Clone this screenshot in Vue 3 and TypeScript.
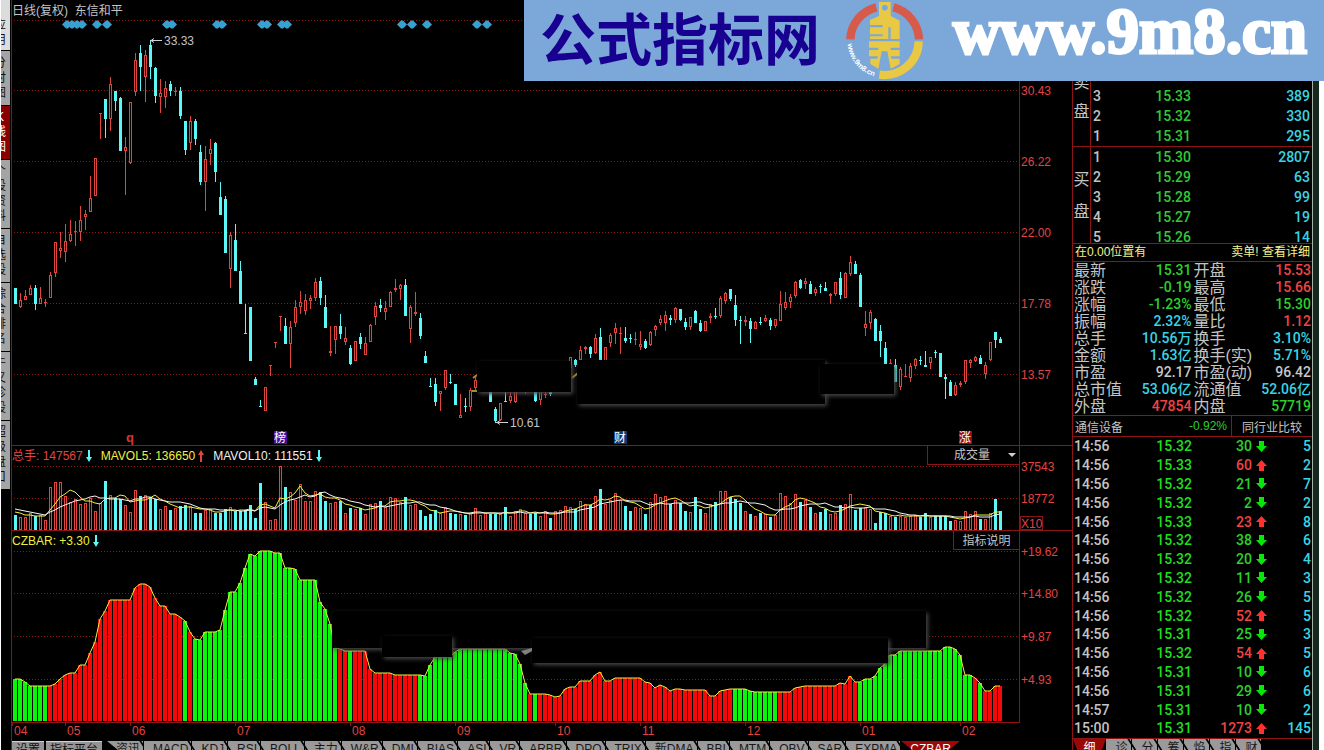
<script setup lang="ts">
import { ref } from 'vue'

type Tone = 'up' | 'down'

// One candle per entry: direction, high, body top, body bottom, low (chart units, y grows downwards).
const candleData =
  'c288,288,304,304 r293,300,307,308 r290,296,300,300 r285,288,295,295 c285,288,304,310 r287,298,304,304 r299,302,303,307 r272,275,298,298 r242,242,273,277 r232,248,251,258 ' +
  'r224,241,252,262 r220,234,241,242 r221,231,232,246 r206,220,232,241 r210,214,217,230 r176,198,212,212 r158,158,196,196 r113,113,114,139 c99,99,119,138 r77,84,119,131 ' +
  'c91,91,101,111 c97,98,151,151 r137,147,151,195 r102,102,163,164 r53,60,92,96 c45,53,67,91 r50,55,77,102 c40,45,67,79 c67,68,96,103 r79,93,97,113 ' +
  'r81,88,97,108 c81,84,91,96 r87,91,92,96 c87,91,116,119 c121,121,150,155 r116,121,143,150 c119,121,139,145 c145,152,182,185 r146,159,182,211 r139,149,154,165 ' +
  'c142,143,172,182 c182,197,215,215 c196,199,253,253 r232,235,269,288 c224,240,271,271 c261,271,304,304 c304,333,334,334 c307,307,361,361 c377,379,385,385 c400,406,407,407 ' +
  'r387,387,411,411 r365,365,366,376 r342,342,343,348 r316,316,317,331 c318,326,344,344 r321,327,344,368 r300,307,323,327 r291,302,307,314 r294,300,311,315 r295,298,301,309 ' +
  'r278,282,298,301 c277,281,298,305 c295,307,328,328 r326,351,353,356 r326,326,340,354 c314,326,334,339 r327,338,342,345 c345,348,364,365 r341,341,361,361 c333,337,344,349 ' +
  'r337,343,355,355 r324,325,342,342 r302,306,317,325 c299,305,308,312 r301,308,312,320 r291,292,307,307 r279,288,290,292 r284,285,289,300 c279,285,316,316 r305,307,329,343 ' +
  'r292,312,314,316 c313,318,336,339 c351,356,363,363 c378,386,387,387 c378,384,402,406 r391,391,394,411 r370,370,388,390 c374,382,383,384 c384,384,405,405 r394,415,418,418 ' +
  'c398,406,407,412 r388,390,407,411 r375,380,388,391 r384,386,390,391 r384,386,390,391 c390,390,402,402 c407,409,421,423 r403,403,420,421 c385,401,402,402 r390,396,401,403 ' +
  'r390,390,402,403 r384,386,390,391 r380,390,391,394 c384,386,390,391 c388,388,401,402 r388,388,400,405 r388,394,395,398 c388,392,394,396 r380,384,388,390 r376,380,386,388 ' +
  'r368,372,380,384 r357,357,368,368 c359,360,365,367 r346,350,360,361 r346,347,349,354 c346,347,354,358 r334,338,353,354 c328,337,360,360 r347,347,361,361 r333,335,343,347 ' +
  'r323,328,333,344 r327,333,334,354 c327,338,341,343 c334,338,339,343 r332,339,340,345 r331,344,347,350 c339,341,348,349 r331,332,345,346 r325,326,330,336 r315,319,323,325 ' +
  'r311,315,323,331 c315,318,320,325 r307,308,320,323 c309,309,320,321 c318,322,327,330 r317,317,327,330 c310,311,323,323 c320,323,331,332 r321,321,331,331 r313,316,318,323 ' +
  'c308,316,317,319 r296,298,316,318 r292,293,301,304 c289,289,299,301 c295,305,320,326 c316,320,321,344 r316,320,322,326 c318,321,329,343 r321,322,329,329 c317,322,323,325 ' +
  'r315,318,321,322 c318,320,326,330 r319,319,326,328 r291,304,321,321 r292,302,308,310 r294,297,302,308 r281,282,296,298 c279,280,288,289 r278,281,284,289 c281,284,294,294 ' +
  'r287,289,293,296 c284,286,287,293 c282,288,291,291 r293,294,296,304 r282,282,294,296 c272,278,295,299 r272,273,298,298 r256,262,274,276 c261,264,274,274 c273,275,307,307 ' +
  'r311,324,328,336 r310,312,323,329 c318,319,341,341 c325,331,341,357 c342,348,364,364 r359,363,364,364 c359,365,382,382 r367,369,387,390 r364,376,377,377 r363,366,378,382 ' +
  'r358,359,366,369 c356,360,361,365 c351,365,367,367 r357,357,363,369 c350,352,353,358 c353,353,377,377 c374,377,379,399 c380,382,396,396 r382,385,395,396 r381,383,385,387 ' +
  'r360,360,382,384 r359,360,363,368 r356,357,361,362 c355,358,364,364 r362,365,374,379 r342,342,360,361 c332,332,340,348 c337,339,343,343'

const xOf = (i: number) => 15 + i * 5

const candles = candleData.split(' ').map((s, i) => {
  const [high, top, bottom, low] = s.slice(1).split(',').map(Number)
  const tone: Tone = s[0] === 'r' ? 'up' : 'down'
  return { x: xOf(i), tone, high, top, bottom, low, height: Math.max(1, bottom - top) }
})

// Volume per day in thirds of a unit.
const volumes = [
  45, 39, 39, 51, 42, 44, 30, 129, 143, 143, 102, 84, 93, 78, 81, 96, 57, 81, 147, 105,
  96, 93, 75, 54, 120, 102, 105, 99, 93, 63, 72, 60, 66, 72, 75, 72, 51, 51, 60, 63,
  51, 51, 63, 69, 57, 57, 60, 75, 36, 141, 84, 30, 33, 191, 129, 114, 90, 138, 87, 87,
  117, 114, 87, 81, 84, 87, 51, 66, 63, 66, 48, 78, 81, 87, 69, 99, 96, 84, 99, 75,
  78, 60, 42, 48, 60, 51, 69, 51, 48, 48, 45, 51, 66, 45, 51, 48, 48, 48, 69, 42,
  57, 63, 51, 48, 51, 42, 57, 36, 57, 60, 72, 69, 63, 87, 78, 75, 102, 123, 78, 90,
  111, 90, 72, 57, 69, 66, 48, 84, 108, 99, 102, 78, 90, 81, 57, 54, 99, 63, 51, 78,
  84, 117, 117, 99, 93, 81, 57, 48, 42, 51, 48, 39, 45, 111, 102, 81, 108, 84, 90, 69,
  51, 54, 63, 48, 51, 75, 78, 108, 60, 66, 69, 63, 21, 54, 51, 42, 39, 42, 39, 42,
  45, 39, 51, 39, 42, 42, 42, 27, 30, 27, 57, 48, 57, 33, 33, 51, 93, 57,
]
const volumeFloor = 530
const volumeBars = volumes.map((v, i) => {
  const height = Math.round(v / 3)
  return { x: xOf(i), y: volumeFloor - height, height, tone: candles[i].tone }
})

const earlier = [80, 78, 75, 72, 70, 68, 60, 58, 55, 52]
const history = earlier.concat(volumes)
const movingAverage = (days: number) =>
  volumes
    .map((_, i) => {
      const end = i + earlier.length + 1
      const sum = history.slice(end - days, end).reduce((a, b) => a + b, 0)
      return `${xOf(i)},${Math.round(volumeFloor - sum / days / 3)}`
    })
    .join(' ')
const ma5 = movingAverage(5)
const ma10 = movingAverage(10)

// CZBAR heights as runs: value, then number of consecutive bars (thirds of a unit above the floor).
const barRuns: [number, number][] = [
  [125, 2], [116, 1], [104, 5], [110, 1], [125, 1], [137, 1], [143, 2], [167, 2], [205, 1], [238, 1],
  [305, 1], [331, 1], [362, 5], [398, 1], [410, 2], [402, 1], [370, 1], [344, 2], [321, 2], [313, 1],
  [300, 1], [266, 1], [245, 1], [242, 1], [266, 3], [273, 1], [333, 1], [386, 2], [413, 1], [459, 1],
  [500, 1], [494, 1], [509, 3], [503, 2], [459, 2], [455, 1], [422, 4], [356, 1], [335, 1], [290, 1],
  [218, 1], [217, 1], [209, 5], [155, 1], [145, 1], [143, 3], [137, 6], [135, 1], [167, 1], [191, 4],
  [207, 1], [215, 10], [204, 1], [202, 1], [171, 1], [113, 1], [80, 4], [78, 1], [72, 1], [74, 1],
  [95, 1], [101, 2], [119, 3], [137, 1], [146, 1], [119, 2], [128, 6], [116, 1], [113, 1], [98, 1],
  [107, 1], [101, 1], [89, 1], [95, 2], [92, 5], [74, 2], [89, 1], [92, 1], [95, 4], [91, 1],
  [86, 8], [98, 1], [101, 1], [104, 7], [113, 1], [110, 1], [134, 1], [116, 1], [117, 1], [125, 2],
  [134, 1], [159, 1], [171, 1], [197, 2], [209, 9], [221, 2], [215, 1], [197, 1], [137, 2], [128, 1],
  [114, 1], [89, 2], [104, 2],
]
const greenRanges: [number, number][] = [
  [0, 6], [34, 34], [36, 64], [67, 67], [81, 102], [104, 104], [144, 152], [169, 191], [193, 193],
]
const czFloor = 721
const czBars = barRuns
  .flatMap(([value, count]) => Array.from({ length: count }, () => value))
  .slice(0, candles.length)
  .map((v, i) => {
    const height = Math.round(v / 3)
    const tone: Tone = greenRanges.some(([a, b]) => i >= a && i <= b) ? 'down' : 'up'
    return { x: xOf(i) - 2, y: czFloor - height, height, tone }
  })
const czLine = czBars.map((b) => `${b.x + 2},${b.y}`).join(' ')

const diamonds = [66, 71, 76, 81, 96, 106, 166, 171, 216, 221, 261, 266, 281, 286, 401, 411, 426, 476, 486]
const priceGrid = [
  { y: 20, label: '' }, { y: 90, label: '30.43' }, { y: 161, label: '26.22' },
  { y: 232, label: '22.00' }, { y: 303, label: '17.78' }, { y: 374, label: '13.57' },
]
const volumeGrid = [{ y: 466, label: '37543' }, { y: 498, label: '18772' }]
const czGrid = [
  { y: 551, label: '+19.62' }, { y: 593, label: '+14.80' },
  { y: 636, label: '+9.87' }, { y: 679, label: '+4.93' },
]
const months = [
  { x: 13, t: '04' }, { x: 66, t: '05' }, { x: 131, t: '06' }, { x: 236, t: '07' },
  { x: 351, t: '08' }, { x: 456, t: '09' }, { x: 556, t: '10' }, { x: 641, t: '11' },
  { x: 746, t: '12' }, { x: 861, t: '01' }, { x: 961, t: '02' },
]

const views = [
  { t: 'Ⅰ应用', h: 51, kind: 'light' }, { t: '分时图', h: 55, kind: '' }, { t: 'K线图', h: 54, kind: 'active' },
  { t: '个股资料', h: 69, kind: '' }, { t: '自选股', h: 54, kind: '' }, { t: '综合排名', h: 69, kind: '' },
  { t: '牛叉诊股', h: 69, kind: '' }, { t: '超级盘口', h: 69, kind: '' },
]
const indicators = [
  '资讯', 'MACD', 'KDJ', 'RSI', 'BOLL', '主力', 'W&R', 'DMI', 'BIAS', 'ASI', 'VR', 'ARBR', 'DPO', 'TRIX',
  '新DMA', 'BBI', 'MTM', 'OBV', 'SAR', 'EXPMA', 'CZBAR',
]
const activeIndicator = ref('CZBAR')
const detailTabs = ['细', '诊', '分', '筹', '焰', '指', '财']
const activeDetail = ref('细')
const subChart = ref('成交量')

const sells = [['3', '15.33', '389'], ['2', '15.32', '330'], ['1', '15.31', '295']]
const buys = [['1', '15.30', '2807'], ['2', '15.29', '63'], ['3', '15.28', '99'], ['4', '15.27', '19'], ['5', '15.26', '14']]

const stats = [
  ['最新', '15.31', 'g', '开盘', '15.53', 'r'],
  ['涨跌', '-0.19', 'g', '最高', '15.66', 'r'],
  ['涨幅', '-1.23%', 'g', '最低', '15.30', 'g'],
  ['振幅', '2.32%', 'c', '量比', '1.12', 'r'],
  ['总手', '10.56万', 'c', '换手', '3.10%', 'c'],
  ['金额', '1.63亿', 'c', '换手(实)', '5.71%', 'c'],
  ['市盈', '92.17', 'w', '市盈(动)', '96.42', 'w'],
  ['总市值', '53.06亿', 'c', '流通值', '52.06亿', 'c'],
  ['外盘', '47854', 'r', '内盘', '57719', 'g'],
]

const ticks: { time: string; price: string; vol: string; tone: Tone; n: string }[] = [
  ['14:56', '15.32', '30', 'down', '5'], ['14:56', '15.33', '60', 'up', '2'], ['14:56', '15.32', '21', 'down', '7'],
  ['14:56', '15.32', '2', 'down', '2'], ['14:56', '15.33', '23', 'up', '8'], ['14:56', '15.32', '38', 'down', '6'],
  ['14:56', '15.32', '20', 'down', '4'], ['14:56', '15.32', '11', 'down', '3'], ['14:56', '15.32', '26', 'down', '5'],
  ['14:56', '15.32', '52', 'up', '5'], ['14:56', '15.31', '25', 'down', '3'], ['14:56', '15.32', '54', 'up', '5'],
  ['14:56', '15.31', '10', 'down', '6'], ['14:56', '15.31', '29', 'down', '6'], ['14:57', '15.31', '10', 'down', '2'],
  ['15:00', '15.31', '1273', 'up', '145'],
].map(([time, price, vol, tone, n]) => ({ time, price, vol, tone: tone as Tone, n }))
</script>

<template>
  <div class="app">
    <nav class="views">
      <button v-for="v in views" :key="v.t" :class="['view', v.kind]" :style="{ height: v.h + 'px' }">
        <span>{{ v.t }}</span>
      </button>
    </nav>

    <main class="charts">
      <section class="pane price">
        <h1 class="title">日线(复权) &nbsp;东信和平</h1>
        <svg class="plot" viewBox="12 0 1007 445" preserveAspectRatio="none">
          <line v-for="g in priceGrid" :key="g.y" class="grid" x1="14" x2="1019" :y1="g.y + 0.5" :y2="g.y + 0.5" />
          <path v-for="d in diamonds" :key="d" class="diamond" :d="`M${d - 4} 24.5l4-4 2 0 4 4-4 4-2 0z`" />
          <g v-for="(c, i) in candles" :key="i" :class="c.tone" shape-rendering="crispEdges">
            <rect :x="c.x" :y="c.high" width="1" :height="Math.max(1, c.low - c.high)" />
            <rect :x="c.x - 1" :y="c.top" width="3" :height="c.height" />
            <rect v-if="c.tone === 'up' && c.height > 2" class="hollow" :x="c.x" :y="c.top + 1" width="1" :height="c.height - 2" />
          </g>
          <path class="spark" d="M473 378l4-3M472 391h5M572 378l6-5" />
          <g class="patch">
            <rect x="477" y="361" width="94" height="31" />
            <rect x="577" y="360" width="248" height="44" />
            <rect x="820" y="364" width="74" height="30" />
          </g>
          <path class="pointer" d="M150 40.5h12M154 38.5l-3 2 3 2M496 422.5h12M500 420.5l-3 2 3 2" />
          <text class="note" x="164" y="45">33.33</text>
          <text class="note" x="510" y="427">10.61</text>
          <text class="mark-q" x="130" y="442">q</text>
          <rect x="274" y="431" width="13" height="13" fill="#4a0c96" />
          <rect x="614" y="431" width="13" height="13" fill="#0c3a78" />
          <rect x="959" y="431" width="13" height="13" fill="#9c0810" />
          <text class="mark" x="280" y="442">榜</text>
          <text class="mark" x="620" y="442">财</text>
          <text class="mark" x="965" y="442">涨</text>
        </svg>
        <svg class="axis" viewBox="0 0 52 445" preserveAspectRatio="none">
          <text v-for="g in priceGrid" :key="g.y" x="1" :y="g.y + 5">{{ g.label }}</text>
        </svg>
      </section>

      <section class="pane volume">
        <header class="head">
          <span class="red">总手: 147567</span>
          <svg class="dir down" viewBox="0 0 6 12"><path d="M2 0h2v7h2l-3 5-3-5h2z" /></svg>
          <span class="yellow">MAVOL5: 136650</span>
          <svg class="dir up" viewBox="0 0 6 12"><path d="M2 12h2v-7h2l-3-5-3 5h2z" /></svg>
          <span class="white">MAVOL10: 111551</span>
          <svg class="dir down" viewBox="0 0 6 12"><path d="M2 0h2v7h2l-3 5-3-5h2z" /></svg>
          <label class="picker">
            <select v-model="subChart" aria-label="副图指标">
              <option>成交量</option>
              <option>CZBAR</option>
            </select>
            <svg viewBox="0 0 8 4"><path d="M0 0h8l-4 4z" /></svg>
          </label>
        </header>
        <svg class="plot" viewBox="12 446 1007 84" preserveAspectRatio="none">
          <line v-for="g in volumeGrid" :key="g.y" class="grid" x1="14" x2="1019" :y1="g.y + 0.5" :y2="g.y + 0.5" />
          <g v-for="(b, i) in volumeBars" :key="i" :class="b.tone" shape-rendering="crispEdges">
            <rect :x="b.x - 1" :y="b.y" width="3" :height="b.height" />
            <rect v-if="b.tone === 'up'" class="hollow" :x="b.x" :y="b.y + 1" width="1" :height="b.height - 2" />
          </g>
          <polyline class="ma yellow-line" :points="ma5" />
          <polyline class="ma white-line" :points="ma10" />
        </svg>
        <svg class="axis" viewBox="0 446 52 84" preserveAspectRatio="none">
          <text v-for="g in volumeGrid" :key="g.y" x="1" :y="g.y + 5">{{ g.label }}</text>
          <rect class="unit" x="0.5" y="516.5" width="22" height="13" />
          <text x="1" y="528">X10</text>
        </svg>
      </section>

      <section class="pane cz">
        <header class="head">
          <span class="yellow">CZBAR: +3.30</span>
          <svg class="dir down" viewBox="0 0 6 12"><path d="M2 0h2v7h2l-3 5-3-5h2z" /></svg>
          <button class="explain">指标说明</button>
        </header>
        <svg class="plot" viewBox="12 531 1007 191" preserveAspectRatio="none">
          <line v-for="g in czGrid" :key="g.y" class="grid" x1="14" x2="1019" :y1="g.y + 0.5" :y2="g.y + 0.5" />
          <rect
            v-for="(b, i) in czBars" :key="i" :class="['bar', b.tone]" shape-rendering="crispEdges"
            :x="b.x" :y="b.y" width="4" :height="b.height"
          />
          <polyline class="ma yellow-line" :points="czLine" />
          <g class="patch">
            <rect x="332" y="611" width="594" height="37" />
            <rect x="382" y="636" width="70" height="21" />
            <rect x="532" y="638" width="356" height="25" />
          </g>
          <path class="smudge" d="M521 651l11-3v3l-7 4z" />
        </svg>
        <svg class="axis" viewBox="0 531 52 191" preserveAspectRatio="none">
          <text v-for="g in czGrid" :key="g.y" x="1" :y="g.y + 5">{{ g.label }}</text>
        </svg>
      </section>

      <section class="months">
        <svg viewBox="12 722 1008 19" preserveAspectRatio="none">
          <path class="rule" d="M12 722.5h1008" />
          <g v-for="m in months" :key="m.t">
            <path class="rule" :d="`M${m.x - 0.5} 722v4`" />
            <text :x="m.x + 1" y="735">{{ m.t }}</text>
          </g>
        </svg>
      </section>

      <nav class="tabs">
        <button class="tool">设置</button>
        <button class="tool">指标平台</button>
        <div class="strip">
          <button
            v-for="t in indicators" :key="t" :class="['tab', { active: t === activeIndicator }]"
            @click="activeIndicator = t"
          >{{ t }}</button>
        </div>
      </nav>
    </main>

    <aside class="quote">
      <section class="book sell">
        <div class="side"><span>卖</span><span>盘</span></div>
        <table>
          <tbody>
            <tr v-for="r in sells" :key="r[0]"><th>{{ r[0] }}</th><td class="price-cell">{{ r[1] }}</td><td class="c">{{ r[2] }}</td></tr>
          </tbody>
        </table>
      </section>
      <section class="book buy">
        <div class="side"><span>买</span><span>盘</span></div>
        <table>
          <tbody>
            <tr v-for="r in buys" :key="r[0]"><th>{{ r[0] }}</th><td class="price-cell">{{ r[1] }}</td><td class="c">{{ r[2] }}</td></tr>
          </tbody>
        </table>
      </section>
      <p class="notice"><span>在0.00位置有</span><span>卖单! 查看详细</span></p>
      <table class="stats">
        <tbody>
          <tr v-for="s in stats" :key="s[0]">
            <td><div><span>{{ s[0] }}</span><b :class="s[2]">{{ s[1] }}</b></div></td>
            <td><div><span>{{ s[3] }}</span><b :class="s[5]">{{ s[4] }}</b></div></td>
          </tr>
        </tbody>
      </table>
      <div class="industry">
        <span>通信设备</span><span class="change">-0.92%</span>
        <button>同行业比较</button>
      </div>
      <table class="ticks">
        <tbody>
          <tr v-for="(t, i) in ticks" :key="i">
            <td class="time">{{ t.time }}</td>
            <td class="last">{{ t.price }}</td>
            <td :class="['vol', t.tone === 'up' ? 'r' : 'g']">{{ t.vol }}</td>
            <td class="arrow">
              <svg viewBox="0 0 11 11" :class="t.tone">
                <path v-if="t.tone === 'up'" d="M5.5 0L11 6H8v5H3V6H0z" />
                <path v-else d="M5.5 11L0 5h3V0h5v5h3z" />
              </svg>
            </td>
            <td class="c">{{ t.n }}</td>
          </tr>
        </tbody>
      </table>
      <nav class="detail-tabs">
        <button
          v-for="t in detailTabs" :key="t" :class="['tab', { active: t === activeDetail }]"
          @click="activeDetail = t"
        >{{ t }}</button>
      </nav>
    </aside>
    <div class="frame"></div>

    <div class="banner">
      <strong class="site">公式指标网</strong>
      <svg class="logo" viewBox="0 0 270 246">
        <g fill="none" stroke-width="25">
          <path stroke="#d65b4a" d="M31 118A103 103 0 0 1 109 22M160 22A103 103 0 0 1 237 118" />
          <path stroke="#e9c944" d="M236 124A103 103 0 0 1 118 224" />
        </g>
        <path
          fill="#e9c944" fill-rule="evenodd"
          d="M117 6h35v42l27 14v55h-27V82h-7v35H90v-8h38v-6H90V82h38v-7H90V60l27-12zM134 14a9 9 0 1 0 1 0z"
        />
        <path fill="#e9c944" d="M87 124h92v19h-27v7h27v19h-27l3 7h24v16l-27 14-10-52h-17l-10 52-24-14v-16h20l3-7H87v-19h28v-7H87z" />
        <path id="ring" fill="none" d="M23 132A110 110 0 0 0 108 230" />
        <text class="ring-text"><textPath href="#ring">www.9m8.cn</textPath></text>
      </svg>
      <strong class="url">www.9m8.cn</strong>
    </div>
  </div>
</template>

<style>
html,
body {
  background: #fff;
  overflow: hidden;
}
</style>

<style scoped>
.app {
  position: relative;
  display: flex;
  height: 100vh;
  min-height: 750px;
  padding: 0 5px 0 1px;
  box-sizing: border-box;
  background: #fff;
  overflow: hidden;
  color: #c4c4c4;
  font: 12px 'Liberation Sans', 'Noto Sans CJK SC', sans-serif;
}
button,
select {
  margin: 0;
  padding: 0;
  border: 0;
  border-radius: 0;
  background: none;
  color: inherit;
  font: inherit;
}
table {
  border-collapse: collapse;
}
td,
th {
  padding: 0;
}

.views {
  flex: 0 0 10px;
  display: flex;
  flex-direction: column;
  background: #000;
}
.view {
  width: 9px;
  box-sizing: border-box;
  flex: none;
  display: flex;
  align-items: center;
  justify-content: flex-end;
  overflow: hidden;
  border-bottom: 1px solid #000;
  background: #a4a4a4;
  color: #101010;
}
.view span {
  flex: none;
  width: 12px;
  margin-right: 4px;
  line-height: 15px;
  word-break: break-all;
}
.view.light {
  background: #dcdcdc;
}
.view.active {
  background: #8a0000;
  color: #fff;
}

.charts {
  flex: 1;
  min-width: 0;
  display: flex;
  flex-direction: column;
  border-left: 1px solid #8c1414;
  background: #000;
}
.pane {
  position: relative;
  display: flex;
  border-bottom: 1px solid #8c1414;
}
.pane.cz {
  border-bottom: 0;
}
.plot {
  flex: 1;
  min-width: 0;
  display: block;
}
.axis {
  flex: 0 0 52px;
  display: block;
  border-left: 1px solid #8c1414;
}
.price svg {
  height: 445px;
}
.volume svg.plot,
.volume svg.axis {
  height: 84px;
}
.cz svg.plot,
.cz svg.axis {
  height: 191px;
}
.axis text,
.months text {
  fill: #e04444;
}
.title {
  position: absolute;
  top: 0;
  left: 0;
  margin: 0;
  font-size: 12px;
  font-weight: 400;
  line-height: 22px;
}
.grid {
  stroke: #8a1616;
  stroke-dasharray: 1 2;
}
.diamond {
  fill: #37a2cf;
}
.up {
  fill: #e04640;
}
.down {
  fill: #5cf8f8;
}
.hollow {
  fill: #100000;
}
.bar.up {
  fill: #f40808;
}
.bar.down {
  fill: #0cf40c;
}
.patch rect {
  fill: #000;
  filter: drop-shadow(2px 2px 2px #484848);
}
.spark {
  stroke: #a89020;
  stroke-width: 2;
}
.smudge {
  fill: #808080;
}
.pointer {
  fill: none;
  stroke: #d0d0d0;
}
.note {
  fill: #c4c4c4;
}
.mark-q {
  fill: #e03030;
  font-size: 13px;
  font-weight: 700;
  text-anchor: middle;
}
.mark {
  fill: #fff;
  text-anchor: middle;
}
.ma {
  fill: none;
  stroke-width: 1;
}
.yellow-line {
  stroke: #f0f040;
}
.white-line {
  stroke: #f4f4f4;
}
.unit {
  fill: none;
  stroke: #8c1414;
}
.head {
  position: absolute;
  top: 0;
  left: 0;
  right: 53px;
  display: flex;
  align-items: flex-start;
  line-height: 20px;
}
.dir {
  width: 6px;
  height: 12px;
  margin: 4px 9px 0 3px;
}
.red {
  color: #e04444;
}
.yellow {
  color: #f0f040;
}
.white {
  color: #f0f0f0;
}
.picker {
  display: flex;
  align-items: center;
  justify-content: flex-end;
  gap: 16px;
  width: 92px;
  height: 19px;
  margin-left: auto;
  padding-right: 3px;
  box-sizing: border-box;
  border-left: 1px solid #8c1414;
  border-bottom: 1px solid #8c1414;
}
.picker select {
  appearance: none;
  width: 38px;
  outline: 0;
}
.picker svg {
  width: 8px;
  height: 4px;
  fill: #d0d0d0;
}
.explain {
  width: 66px;
  height: 19px;
  margin-left: auto;
  border-left: 1px solid #8c1414;
  border-bottom: 1px solid #8c1414;
  line-height: 20px;
}
.months {
  padding-right: 52px;
}
.months svg {
  display: block;
  width: 100%;
  height: 19px;
}
.rule {
  stroke: #8c1414;
}

.tabs {
  display: flex;
  height: 18px;
  overflow: hidden;
}
.tool {
  flex: none;
  margin-right: 2px;
  padding: 0 4px;
  background: #949494;
  border-top: 1px solid #d0d0d0;
  color: #101010;
  line-height: 16px;
}
.strip,
.detail-tabs {
  display: flex;
}
.strip {
  margin-left: 3px;
}
.tab {
  position: relative;
  flex: none;
  padding: 0 3px 0 9px;
  border-right: 1px solid #000;
  background: #9a9a9a;
  color: #181818;
  line-height: 17px;
  white-space: nowrap;
}
.tab::after {
  content: '';
  position: absolute;
  z-index: 1;
  top: 0;
  right: -4px;
  width: 2px;
  height: 18px;
  background: #000;
  transform: skewX(32deg);
}
.tab:first-child {
  clip-path: polygon(0 0, 100% 0, 120% 100%, 11px 100%);
}
.tab.active {
  padding: 0 9px;
  background: #9c0808;
  color: #fff;
  clip-path: polygon(0 0, 100% 0, calc(100% - 11px) 100%, 11px 100%);
  border: 0;
}
.tab.active::after {
  content: none;
}

.quote {
  flex: 0 0 239px;
  display: flex;
  flex-direction: column;
  border-left: 1px solid #8c1414;
  background: #000;
}
.quote > * {
  flex: none;
}
.book {
  display: flex;
  border-bottom: 1px solid #8c1414;
  overflow: hidden;
  box-sizing: border-box;
  font: 500 14px Roboto, 'Noto Sans CJK SC', sans-serif;
}
.book table {
  flex: 1;
}
.book tr {
  height: 20px;
}
.book th {
  width: 24px;
  padding-left: 2px;
  text-align: left;
  font-weight: 500;
}
.book td {
  text-align: right;
  padding-right: 2px;
}
.book td.price-cell {
  width: 74px;
  color: #34c834;
}
.book.sell {
  height: 147px;
  align-items: flex-end;
}
.book.buy {
  height: 97px;
  align-items: flex-start;
}
.side {
  width: 17px;
  flex: none;
  align-self: stretch;
  display: flex;
  flex-direction: column;
  align-items: center;
  border-right: 1px solid #8c1414;
  font-size: 16px;
  font-weight: 400;
}
.sell .side {
  justify-content: flex-end;
  padding-bottom: 20px;
  line-height: 29px;
}
.buy .side {
  padding-top: 17px;
  line-height: 32px;
}
.notice {
  display: flex;
  justify-content: space-between;
  margin: 0;
  padding: 0 2px;
  border-bottom: 1px solid #8c1414;
  color: #f4f490;
  line-height: 17px;
}
.r {
  color: #f04444;
}
.g {
  color: #2cd02c;
}
.c {
  color: #38d4e4;
}
.w {
  color: #c8c8c8;
}
.stats {
  width: 100%;
  height: 154px;
  table-layout: fixed;
  border-bottom: 1px solid #8c1414;
  font-size: 16px;
}
.stats td {
  height: 17px;
}
.stats td > div {
  display: flex;
  justify-content: space-between;
  align-items: center;
  height: 17px;
  padding: 0 1px 0 1px;
  line-height: 17px;
  white-space: nowrap;
}
.stats b {
  font: 500 14px/17px Roboto, 'Noto Sans CJK SC', sans-serif;
}
.industry {
  display: flex;
  align-items: center;
  height: 20px;
  padding-left: 2px;
  border-bottom: 1px solid #8c1414;
}
.change {
  margin-left: auto;
  padding-right: 4px;
  color: #2cd02c;
}
.industry button {
  width: 81px;
  height: 20px;
  border-left: 1px solid #8c1414;
}
.ticks {
  width: 100%;
  height: 302px;
  border-bottom: 1px solid #8c1414;
  font: 500 14px Roboto, sans-serif;
}
.ticks td {
  text-align: right;
  line-height: 18px;
}
.ticks .time {
  width: 60px;
  padding-left: 1px;
  text-align: left;
}
.ticks .last {
  width: 58px;
  color: #20dc20;
}
.ticks .vol {
  width: 60px;
}
.ticks .arrow {
  width: 15px;
}
.ticks .arrow svg {
  display: block;
  width: 11px;
  height: 11px;
  margin-left: 4px;
}
.ticks .c {
  padding-right: 1px;
}
.arrow .up {
  fill: #ff3030;
}
.arrow .down {
  fill: #08e808;
}
.detail-tabs {
  height: 18px;
  overflow: hidden;
}
.detail-tabs .tab {
  width: 26px;
}
.detail-tabs .tab.active {
  width: 33px;
  padding: 0 8px;
  clip-path: polygon(0 0, 100% 0, calc(100% - 7px) 100%, 7px 100%);
}

.frame {
  flex: 0 0 6px;
  background: #14281e;
  border-left: 1px solid #a8b0ac;
}

.banner {
  position: absolute;
  top: 0;
  right: 0;
  display: flex;
  align-items: flex-start;
  width: 800px;
  height: 81px;
  padding-left: 16px;
  box-sizing: border-box;
  background: #7ba8d8;
  white-space: nowrap;
}
.site {
  width: 300px;
  color: #180090;
  font: 700 56px/72px 'Noto Sans CJK SC', sans-serif;
}
.logo {
  flex: none;
  width: 90px;
  height: 82px;
}
.ring-text {
  fill: #fff;
  font: 700 22px 'Liberation Sans', sans-serif;
}
.url {
  margin-left: 23px;
  color: #fff;
  font: 700 65px/62px 'Liberation Serif', serif;
  -webkit-text-stroke: 3px #fff;
}
</style>
